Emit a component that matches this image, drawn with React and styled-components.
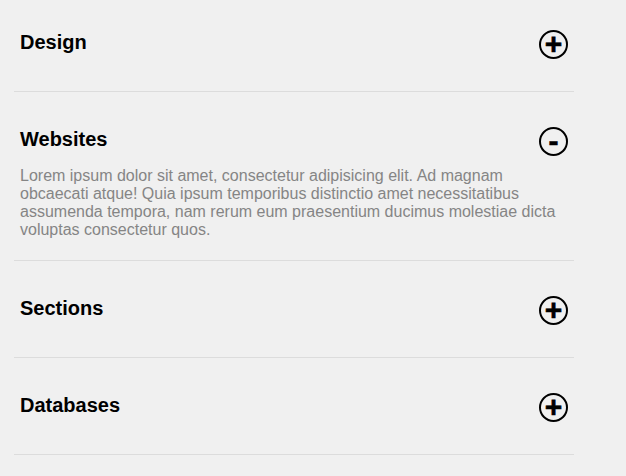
import { useState } from 'react';
import styled, { createGlobalStyle } from 'styled-components';

const GlobalStyle = createGlobalStyle`
  html, body {
    margin: 0;
    padding: 0;
    background-color: #f0f0f0;
    font-family: 'Liberation Sans', Arial, sans-serif;
  }
`;

const StyledAccordion = styled.div`
  width: 560px;
  padding: 0 14px;
`;

const StyledItem = styled.div`
  padding: ${({ $open }) => ($open ? '35px 6px 21px' : '35px 6px 32px')};
  border-bottom: 1px solid #dcdcdc;

  &:first-child {
    padding-top: 30px;
  }
`;

const StyledHeader = styled.div`
  display: flex;
  align-items: center;
  justify-content: space-between;
  cursor: pointer;
`;

const StyledTitle = styled.h3`
  margin: -5px 0 0;
  font-size: 20px;
  font-weight: bold;
  color: #000;
  line-height: 23px;
`;

const StyledToggle = styled.span`
  box-sizing: border-box;
  width: 29px;
  height: 29px;
  border: 2px solid #000;
  border-radius: 50%;
  display: flex;
  align-items: center;
  justify-content: center;
  font-size: 30px;
  font-weight: bold;
  line-height: 1;
  color: #000;
  padding-bottom: 2px;
  -webkit-text-stroke: 0.6px #000;
`;

const StyledContent = styled.p`
  margin: 11px 0 0;
  font-size: 16px;
  line-height: 18px;
  color: #858585;
`;

const items = [
  { id: 1, title: 'Design' },
  {
    id: 2,
    title: 'Websites',
    body:
      'Lorem ipsum dolor sit amet, consectetur adipisicing elit. Ad magnam obcaecati atque! Quia ipsum temporibus distinctio amet necessitatibus assumenda tempora, nam rerum eum praesentium ducimus molestiae dicta voluptas consectetur quos.',
  },
  { id: 3, title: 'Sections' },
  { id: 4, title: 'Databases' },
];

const App = () => {
  const [openId, setOpenId] = useState(2);

  return (
    <>
      <GlobalStyle />
      <StyledAccordion>
        {items.map((item) => {
          const open = item.id === openId;
          return (
            <StyledItem key={item.id} $open={open}>
              <StyledHeader onClick={() => setOpenId(open ? null : item.id)}>
                <StyledTitle>{item.title}</StyledTitle>
                <StyledToggle>{open ? '-' : '+'}</StyledToggle>
              </StyledHeader>
              {open && <StyledContent>{item.body}</StyledContent>}
            </StyledItem>
          );
        })}
      </StyledAccordion>
    </>
  );
};

export default App;
